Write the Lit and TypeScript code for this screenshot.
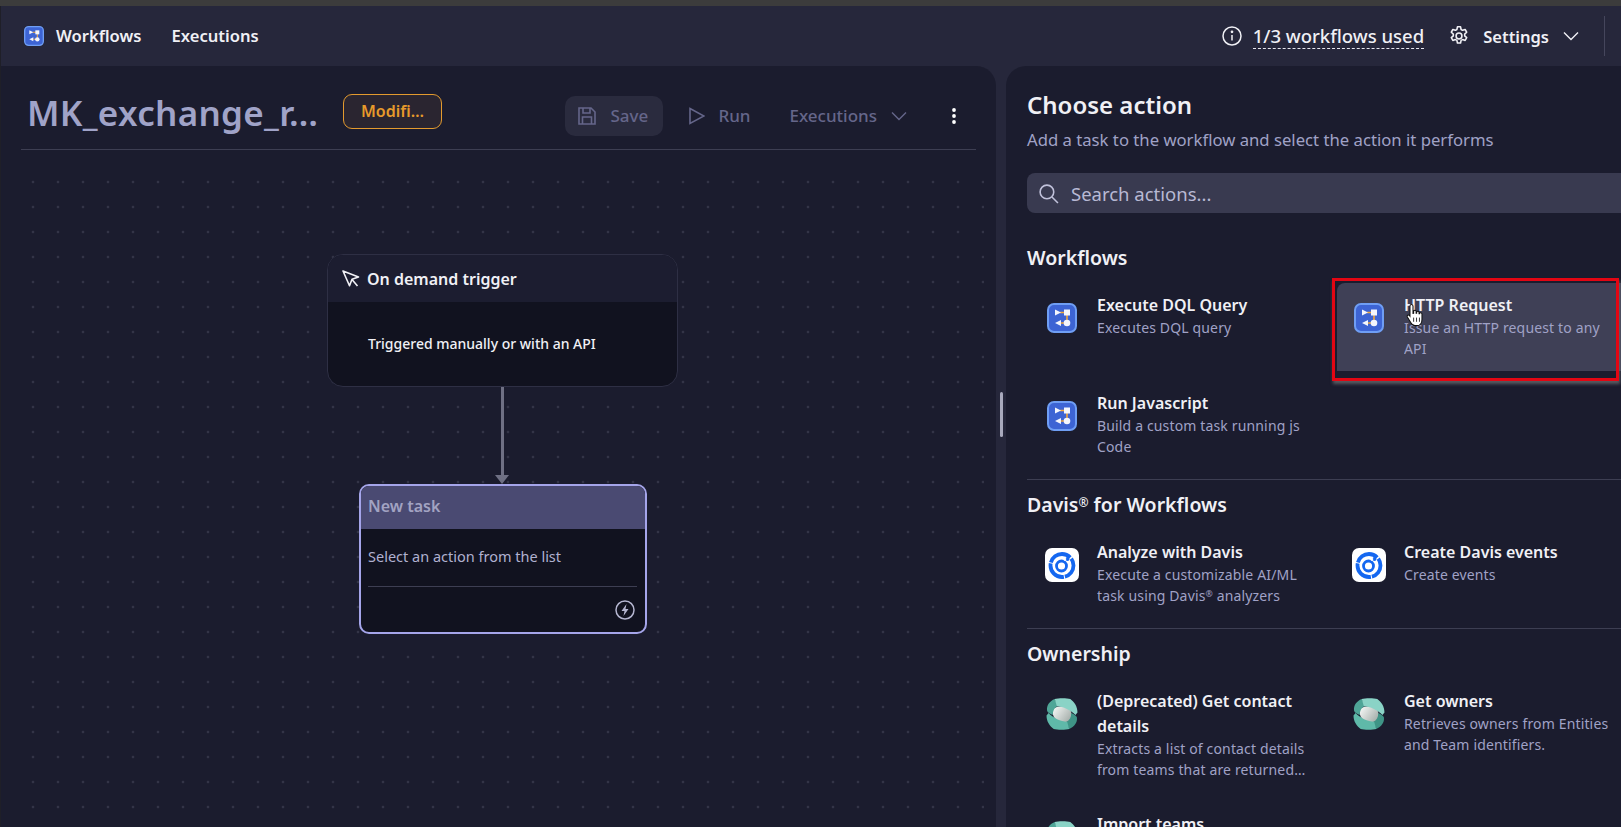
import { LitElement, html, css, svg } from 'lit'
import { customElement } from 'lit/decorators.js'

const chevron = (size: number) => html`<svg class="ic" width=${size} height=${size} viewBox="0 0 16 16" fill="none" stroke="currentColor" stroke-width="1.4"><path d="M1 4.5l7 7 7-7" /></svg>`

const workflowIcon = (size: number) => html`
  <svg width=${size} height=${size} viewBox="0 0 30 30">
    <rect x="1" y="1" width="28" height="28" rx="6" fill="#3d64d4" stroke="#6f9ef4" stroke-width="2" />
    <path d="M13 9.500h5M20 12v6M14 20h4" stroke="#f0a63a" stroke-width="1.600" fill="none" />
    <path d="M8 6.500l6 3-6 3z" fill="#f4f6fd" />
    <rect x="17" y="6.500" width="6" height="6" fill="#f4f6fd" />
    <path d="M14 17l-6 3 6 3z" fill="#f4f6fd" />
    <circle cx="20" cy="20" r="3.300" fill="#f4f6fd" />
  </svg>`

const davisIcon = () => html`
  <svg width="34" height="34" viewBox="0 0 34 34">
    <rect width="34" height="34" rx="7" fill="#fff" />
    <circle cx="17" cy="17.500" r="11.500" fill="none" stroke="#1467f0" stroke-width="3.800" stroke-dasharray="15 1 22 1 24 1.500" />
    <circle cx="16.500" cy="18" r="5" fill="none" stroke="#1467f0" stroke-width="2.800" />
    <circle cx="22.500" cy="11" r="2" fill="#1467f0" />
    <path d="M19 12.500l2-2" stroke="#fff" stroke-width="1.400" />
  </svg>`

const ownerLobes = (band: string, curl: string) => svg`
  <path d="M8 1C3 3 0 7 .5 12c.5 2 2.500 3 5.500 4.500 0-4 1.500-7 5-9z" fill=${curl} />
  <path d="M8 1c3-1 12-1 15 0 4 3 7 7 7 13l-2 2.500C24 12 16 8 10 8z" fill=${band} />`

const ownerIcon = () => html`
  <svg width="32" height="32" viewBox="0 0 30 31">
    <defs>
      <linearGradient id="om" x1="0" y1="0" x2="1" y2="0.6">
        <stop offset="0" stop-color="#fbfcfb" /><stop offset="1" stop-color="#a9b2ae" />
      </linearGradient>
    </defs>
    <path d="M7 10q7-4 15 0 4 6 2 11-7 5-15 0-5-6-2-11z" fill="url(#om)" />
    ${ownerLobes('#8ad3c6', '#4fa597')}
    <g transform="rotate(180 15 15.500)">${ownerLobes('#5fb9a9', '#3f9486')}</g>
  </svg>`

const reg = html`<span class="reg">®</span>`

type Action = { title: string; desc: any; icon: any; hover?: boolean }

const sections: { name: any; items: Action[] }[] = [
  {
    name: 'Workflows',
    items: [
      { title: 'Execute DQL Query', desc: 'Executes DQL query', icon: workflowIcon(30) },
      { title: 'HTTP Request', desc: 'Issue an HTTP request to any API', icon: workflowIcon(30), hover: true },
      { title: 'Run Javascript', desc: 'Build a custom task running js Code', icon: workflowIcon(30) }
    ]
  },
  {
    name: html`Davis${reg} for Workflows`,
    items: [
      { title: 'Analyze with Davis', desc: html`Execute a customizable AI/ML task using Davis${reg} analyzers`, icon: davisIcon() },
      { title: 'Create Davis events', desc: 'Create events', icon: davisIcon() }
    ]
  },
  {
    name: 'Ownership',
    items: [
      { title: '(Deprecated) Get contact details', desc: 'Extracts a list of contact details from teams that are returned by the owners action', icon: ownerIcon() },
      { title: 'Get owners', desc: 'Retrieves owners from Entities and Team identifiers.', icon: ownerIcon() },
      { title: 'Import teams', desc: 'Imports teams', icon: ownerIcon() }
    ]
  }
]

@customElement('app-root')
export class AppRoot extends LitElement {
  renderItem (a: Action) {
    return html`
      <div class="item ${a.hover ? 'item--hover' : ''}">
        <div class="item__icon">${a.icon}</div>
        <div class="item__text">
          <div class="item__title">${a.title}</div>
          <div class="item__desc">${a.desc}</div>
        </div>
        ${a.hover ? html`
          <div class="mark"></div>
          <svg class="hand" width="19" height="24" viewBox="0 0 18 23">
            <path d="M5 1.500c1 0 1.600.7 1.600 1.600V10l.6-.1V8.200c0-1.600 2.400-1.600 2.400 0v1.700h.5V9c0-1.500 2.300-1.500 2.300 0v1.300h.5c0-1.400 2.300-1.400 2.300.2v5.200c0 3-1.600 6-5 6H8.400c-2.200 0-3-1.200-4-3L1.200 13.500c-.8-1.500 1-2.600 2.100-1.400l.4.5V3.100C3.700 2.200 4.200 1.500 5 1.500z" fill="#fff" stroke="#111" stroke-width="1" />
            <path d="M7.200 14v4M10 14v4M12.800 14v4" stroke="#111" stroke-width=".8" />
          </svg>` : ''}
      </div>`
  }

  render () {
    return html`
      <div class="chrome"></div>
      <header class="nav">
        <div class="nav__l">
          <span class="nav__logo">${workflowIcon(20)}</span>
          <span class="nav__link">Workflows</span>
          <span class="nav__link">Executions</span>
        </div>
        <div class="nav__r">
          <svg class="ic" width="20" height="20" viewBox="0 0 20 20" fill="none" stroke="currentColor" stroke-width="1.500">
            <circle cx="10" cy="10" r="9" /><path d="M10 9v5.500" /><circle cx="10" cy="5.800" r=".6" fill="currentColor" />
          </svg>
          <span class="nav__usage">1/3 workflows used</span>
          <svg class="ic nav__gear" width="22" height="22" viewBox="0 0 24 24" fill="none" stroke="currentColor" stroke-width="1.700" stroke-linejoin="round">
            <circle cx="12" cy="12" r="3.200" />
            <path d="M10.300 2h3.400l.6 2.900 1.600.9 2.800-.9 1.700 3-2.200 2v1.900l2.200 2-1.700 3-2.800-.9-1.600.9-.6 2.900h-3.400l-.6-2.900-1.600-.9-2.800.9-1.700-3 2.200-2v-1.900l-2.200-2 1.700-3 2.800.9 1.600-.9z" />
          </svg>
          <span class="nav__settings">Settings</span>
          ${chevron(16)}
          <span class="nav__sep"></span>
        </div>
      </header>

      <main class="main">
        <section class="left">
          <div class="head">
            <h1 class="head__title">MK_exchange_r…</h1>
            <span class="head__badge">Modifi…</span>
            <div class="head__tools">
              <span class="tool tool--save">
                <svg width="20" height="20" viewBox="0 0 20 20" fill="none" stroke="currentColor" stroke-width="1.600"><path d="M2 2h12l4 4v12H2zM6 2v5h7V2M5.500 18v-7h9v7" /></svg>
                Save
              </span>
              <span class="tool tool--run">
                <svg width="16" height="18" viewBox="0 0 16 18" fill="none" stroke="currentColor" stroke-width="1.600"><path d="M1 1.500l14 7.500-14 7.500z" /></svg>
                Run
              </span>
              <span class="tool tool--exec">Executions ${chevron(16)}</span>
              <svg class="tool__more" width="4" height="16" viewBox="0 0 4 16" fill="#fff"><circle cx="2" cy="2" r="1.900" /><circle cx="2" cy="8" r="1.900" /><circle cx="2" cy="14" r="1.900" /></svg>
            </div>
          </div>

          <div class="canvas">
            <div class="node node--trigger">
              <div class="node__head">
                <svg width="18" height="18" viewBox="0 0 18 18" fill="none" stroke="#f0f0f5" stroke-width="1.600" stroke-linejoin="round"><path d="M1 1l15.500 6-6.500 2.200-2.500 6.500zM10 9.500l5.500 6.500" /></svg>
                On demand trigger
              </div>
              <div class="node__body">Triggered manually or with an API</div>
            </div>
            <div class="edge"></div>
            <div class="arrow"></div>
            <div class="node node--task">
              <div class="task__head">New task</div>
              <div class="task__body">
                <div class="task__text">Select an action from the list</div>
                <div class="task__foot">
                  <svg width="20" height="20" viewBox="0 0 20 20" fill="none" stroke="#b5b6d0" stroke-width="1.500"><circle cx="10" cy="10" r="9" /><path d="M11.500 4L6.500 11h3l-1 5 5-7h-3z" fill="#b5b6d0" stroke="none" /></svg>
                </div>
              </div>
            </div>
          </div>
        </section>

        <div class="gutter"><span class="gutter__grip"></span></div>

        <aside class="right">
          <h2 class="right__title">Choose action</h2>
          <p class="right__sub">Add a task to the workflow and select the action it performs</p>
          <div class="search">
            <svg width="21" height="21" viewBox="0 0 20 20" fill="none" stroke="#c0c1da" stroke-width="1.500"><circle cx="8.500" cy="8.500" r="6.500" /><path d="M13.300 13.300L19 19" /></svg>
            <span>Search actions...</span>
          </div>
          ${sections.map((s, i) => html`
            ${i > 0 ? html`<hr class="rule" />` : ''}
            <h3 class="sect">${s.name}</h3>
            <div class="grid">${s.items.map(a => this.renderItem(a))}</div>
          `)}
        </aside>
      </main>
    `
  }

  static styles = css`
    :host {
      display: flex;
      flex-direction: column;
      height: 100vh;
      overflow: hidden;
      background: #26273b;
      font-family: "Noto Sans", sans-serif;
      color: #f0f0f5;
    }

    .ic { flex: none; display: block; }

    .reg { font-size: .62em; line-height: 0; vertical-align: .45em; }

    .chrome { height: 6px; flex: none; background: #3c3c3c; }

    .nav {
      flex: none;
      height: 60px;
      display: flex;
      align-items: center;
      justify-content: space-between;
      padding: 0 16px 0 24px;
      font-size: 16.600px;
      font-weight: 600;
      box-shadow: inset 1px 0 0 #1f1f28;
    }

    .nav__l, .nav__r { display: flex; align-items: center; }
    .nav__logo { display: flex; margin-right: 12px; }
    .nav__link { margin-right: 30px; line-height: 20px; margin-bottom: 1px; }
    .nav__usage { margin-left: 11px; border-bottom: 1px dashed #e6e6ef; font-size: 18.500px; font-weight: 500; line-height: 24px; }
    .nav__gear { margin-left: 24px; }
    .nav__settings { margin: 0 14px 0 13px; font-size: 16.500px; }
    .nav__sep { width: 1px; height: 40px; background: #45465c; margin-left: 25px; }

    .main { flex: 1; min-height: 0; display: flex; }

    .left {
      flex: none;
      width: 996px;
      display: flex;
      flex-direction: column;
      background: #1b1c2e;
      border-top-right-radius: 20px;
      box-shadow: inset 1px 0 0 #1f1f28;
    }

    .head {
      flex: none;
      height: 84px;
      box-sizing: border-box;
      margin: 0 20px 0 21px;
      padding: 7px 0 0 6px;
      border-bottom: 1px solid #3d3e52;
      display: flex;
      align-items: center;
      gap: 27px;
    }

    .head__title {
      margin: 4px 0 0;
      width: 289px;
      font-size: 35px;
      line-height: 40px;
      font-weight: 600;
      letter-spacing: .3px;
      color: #a0a3c8;
      white-space: nowrap;
    }

    .head__badge {
      width: 99px;
      height: 35px;
      box-sizing: border-box;
      text-align: center;
      line-height: 33px;
      border: 1px solid #e39a2e;
      border-radius: 9px;
      background: #2a2530;
      color: #e79a2b;
      font-size: 16px;
      font-weight: 600;
    }

    .head__tools {
      margin: 9px 0 0 auto;
      display: flex;
      align-items: center;
      font-size: 17px;
      font-weight: 500;
      color: #65668a;
      padding-right: 20px;
    }

    .tool { display: flex; align-items: center; }
    .tool--save { width: 98px; height: 40px; box-sizing: border-box; padding-left: 12px; gap: 13px; background: #2a2b3e; border-radius: 10px; }
    .tool--run { margin-left: 26px; gap: 13px; }
    .tool--exec { margin-left: 39px; gap: 14px; }
    .tool__more { margin-left: 45px; }

    .canvas {
      position: relative;
      flex: 1;
      margin: 0 12px 0 20px;
      padding-top: 25px;
      background-image: radial-gradient(circle at center, #5a5b70 0.7px, transparent 1.1px);
      background-size: 25px 25px;
      background-position: 0.5px -5.5px;
      background-clip: content-box;
    }

    .node { position: absolute; box-sizing: border-box; overflow: hidden; }

    .node--trigger {
      left: 307px;
      top: 104px;
      width: 351px;
      height: 133px;
      border: 1px solid #2e2f44;
      border-radius: 16px;
      background: #11121f;
    }

    .node__head {
      height: 47px;
      background: #1c1d30;
      display: flex;
      align-items: center;
      gap: 7px;
      padding-left: 14px;
      font-size: 16px;
      font-weight: 600;
    }

    .node__body {
      padding: 30px 0 0 40px;
      font-size: 14px;
      font-weight: 500;
      line-height: 24px;
    }

    .edge { position: absolute; left: 481px; top: 237px; width: 3px; height: 90px; background: #6f7084; }

    .arrow {
      position: absolute;
      left: 475px;
      top: 325px;
      width: 0;
      height: 0;
      border-left: 7.500px solid transparent;
      border-right: 7.500px solid transparent;
      border-top: 9px solid #6f7084;
    }

    .node--task {
      left: 339px;
      top: 334px;
      width: 288px;
      height: 150px;
      border: 2px solid #a5a5ea;
      border-radius: 10px;
      background: #11121f;
      display: flex;
      flex-direction: column;
    }

    .task__head {
      height: 43px;
      flex: none;
      background: #4a4a72;
      color: #a2a3c2;
      font-size: 16px;
      font-weight: 600;
      line-height: 40px;
      padding-left: 7px;
    }

    .task__body { flex: 1; padding: 0 8px 0 7px; display: flex; flex-direction: column; }
    .task__text { height: 58px; box-sizing: border-box; padding-top: 15px; border-bottom: 1px solid #3d3e52; font-size: 14.500px; line-height: 24px; color: #b0b1d0; }
    .task__foot { flex: 1; display: flex; align-items: center; justify-content: flex-end; padding-right: 2px; }

    .gutter { flex: none; width: 10px; display: flex; align-items: center; justify-content: center; }
    .gutter__grip { width: 3px; height: 45px; margin-bottom: 64px; background: #a9aabd; border-radius: 2px; }

    .right {
      flex: 1;
      min-width: 0;
      background: #1b1c2e;
      border-top-left-radius: 20px;
      padding: 0 0 0 21px;
      overflow: hidden;
    }

    .right__title { margin: 23px 0 0; font-size: 24px; line-height: 32px; font-weight: 600; }
    .right__sub { margin: 7px 0 0; font-size: 16.700px; line-height: 24px; color: #a0a2c6; }

    .search {
      margin: 21px 0 20px;
      height: 40px;
      box-sizing: border-box;
      display: flex;
      align-items: center;
      gap: 12px;
      padding-left: 11px;
      background: #393a50;
      border-radius: 8px 0 0 8px;
      font-size: 18.500px;
      color: #b8b9d4;
    }

    .rule { margin: 10px 0 0; border: 0; border-top: 1px solid #3d3e52; }

    .sect { margin: 0; height: 50px; font-size: 19.500px; line-height: 50px; font-weight: 600; }

    .grid {
      display: grid;
      grid-template-columns: 307px 307px;
      gap: 10px 0;
      margin-left: 3px;
    }

    .item {
      position: relative;
      display: flex;
      gap: 17px;
      padding: 10px 16px 12px 14px;
    }

    .item__icon { flex: none; width: 36px; height: 30px; margin-top: 10px; display: flex; align-items: center; justify-content: center; }
    .item__text { width: 212px; }
    .item__title { font-size: 16px; font-weight: 600; line-height: 25px; }

    .item__desc {
      font-size: 14px;
      letter-spacing: .15px;
      line-height: 21px;
      margin-top: -1px;
      color: #a0a2c6;
      display: -webkit-box;
      -webkit-box-orient: vertical;
      -webkit-line-clamp: 2;
      overflow: hidden;
    }

    .item--hover { background: #3f4056; border-radius: 8px 0 0 0; }

    .mark {
      position: absolute;
      left: -5px;
      top: -5px;
      width: 287px;
      height: 103px;
      box-sizing: border-box;
      border: 3px solid #e30613;
      box-shadow: 1px 3px 3px rgba(130, 130, 130, 0.6);
      pointer-events: none;
    }

    .hand { position: absolute; left: 69px; top: 20px; }
  `
}
